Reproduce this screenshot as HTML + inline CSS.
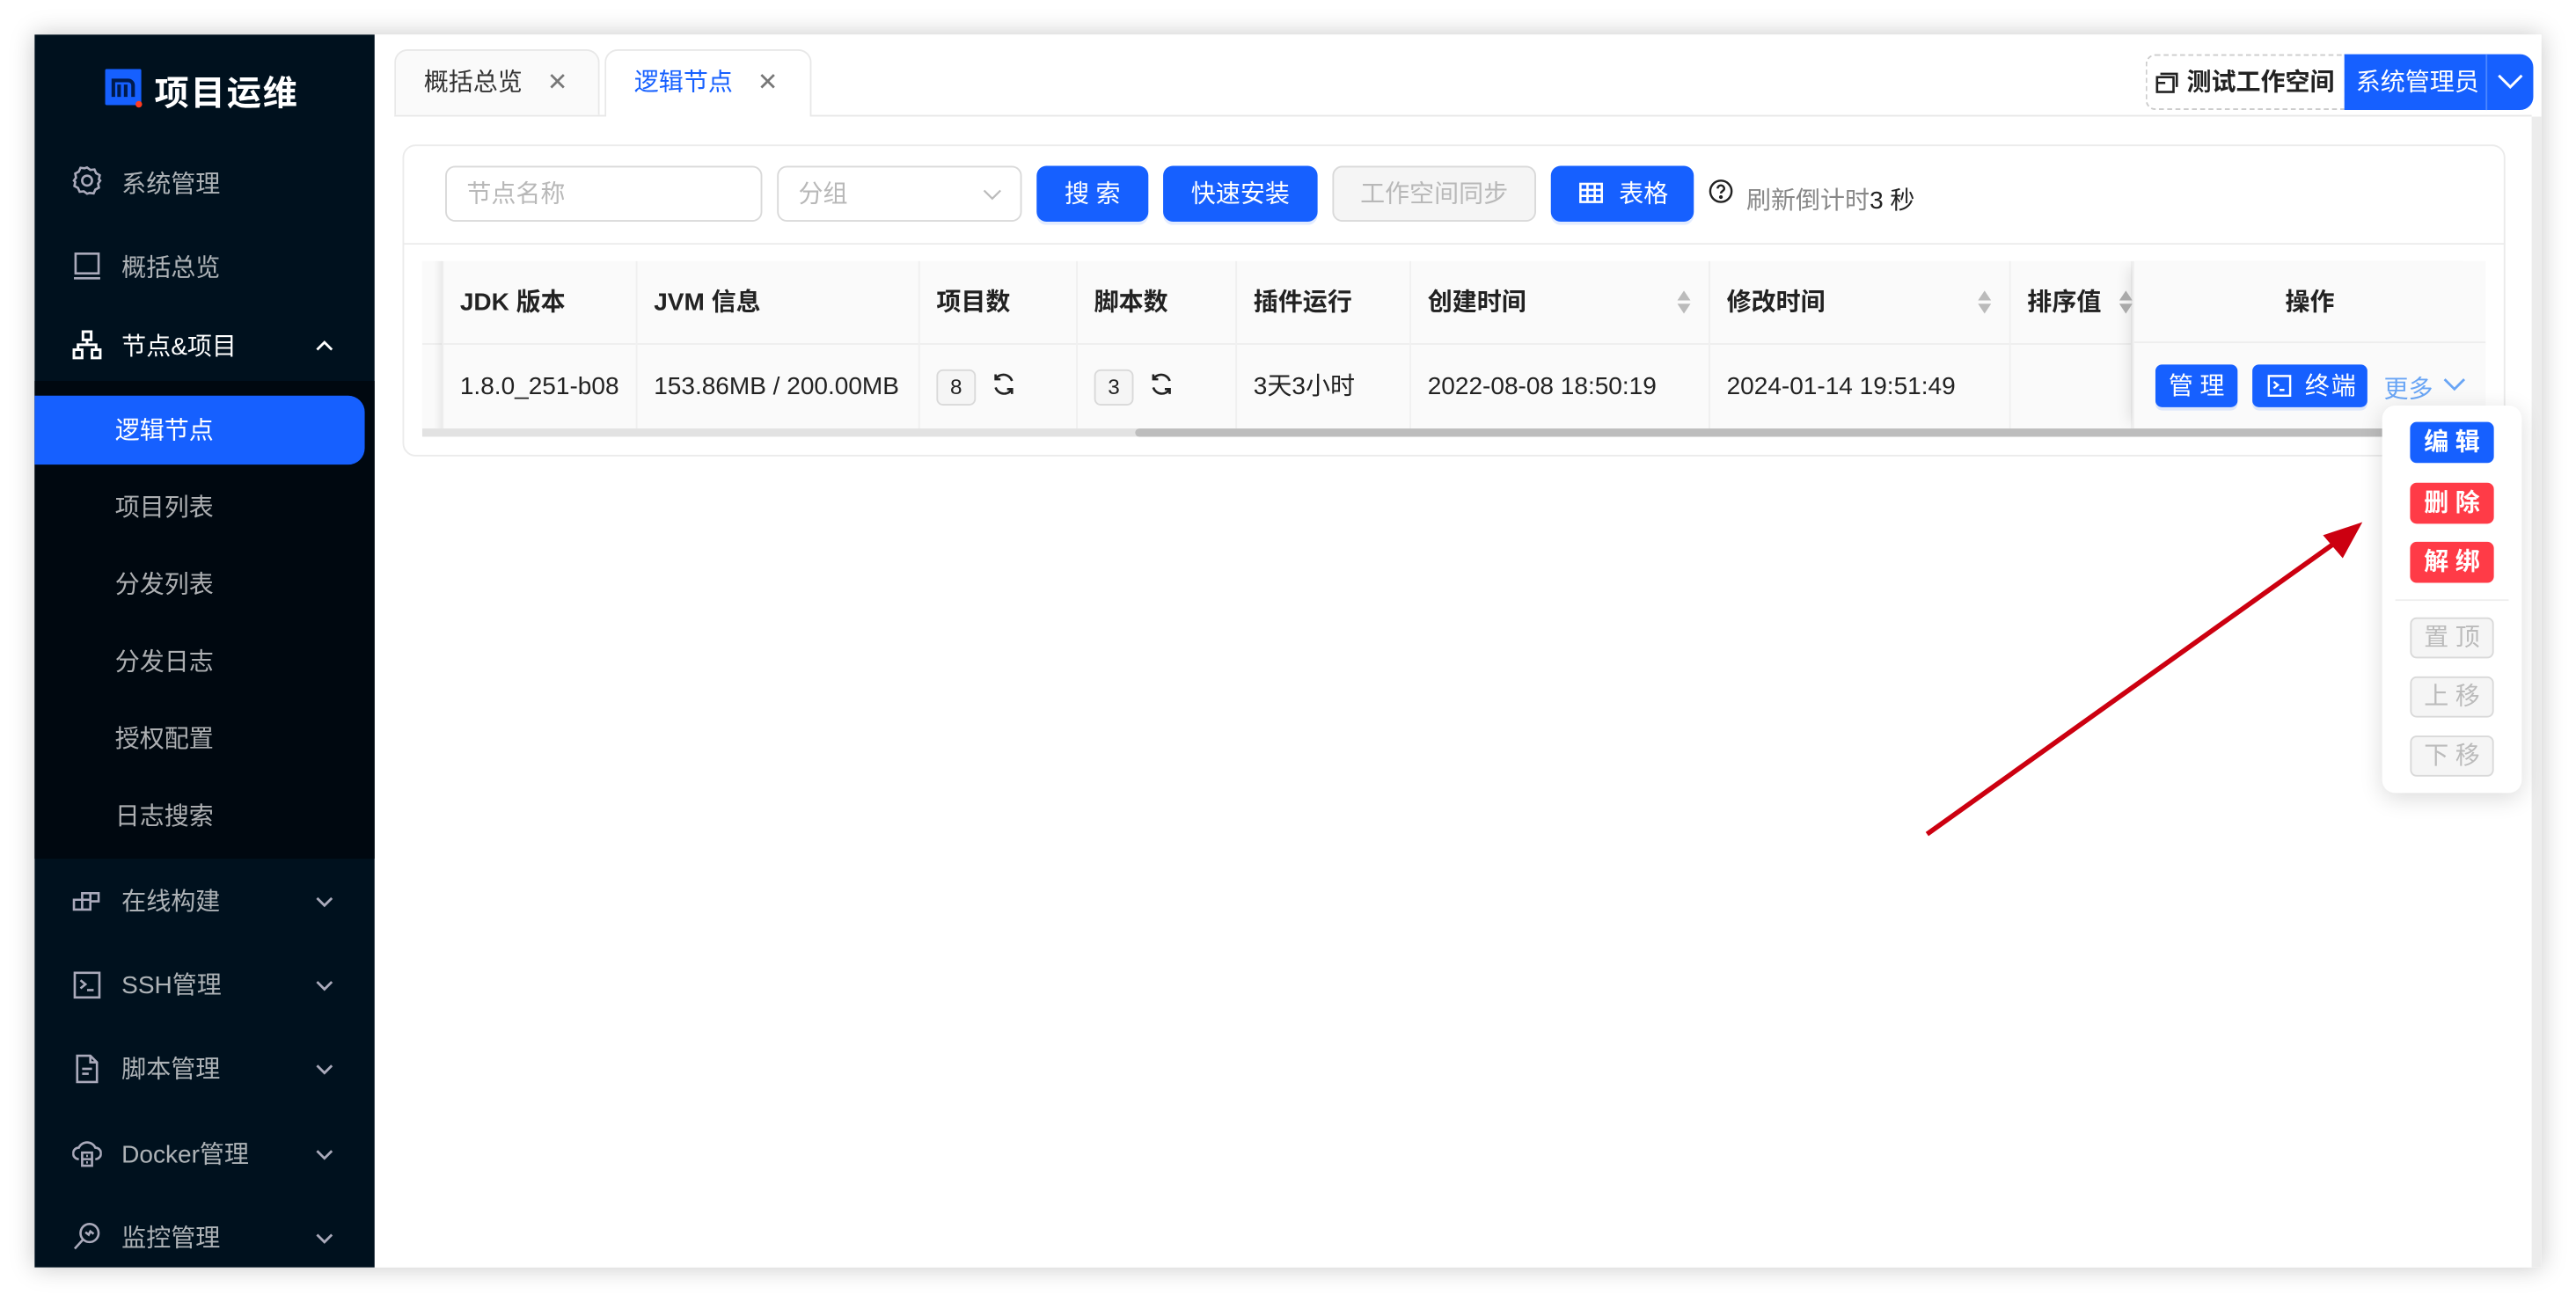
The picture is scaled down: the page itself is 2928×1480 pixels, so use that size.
<!DOCTYPE html>
<html><head><meta charset="utf-8"><style>
*{margin:0;padding:0;box-sizing:border-box}
html,body{width:2928px;height:1480px;overflow:hidden;background:#fff}
body{font-family:"Liberation Sans","Noto Sans CJK SC",sans-serif}
#w{position:absolute;left:0;top:0;width:1568px;height:793px;transform:scale(1.86735,1.86633);transform-origin:0 0;background:#fff}
.a{position:absolute}
.win{left:21px;top:21px;width:1526px;height:751px;background:#fff;box-shadow:0 0 14px rgba(0,0,0,.22);overflow:hidden}
.side{left:0;top:0;width:207px;height:751px;background:#00111e}
.sub{left:0;top:211px;width:207px;height:291px;background:#000810}
.mi{position:absolute;left:53px;color:rgba(255,255,255,.68);font-size:15px;line-height:20px;margin-top:1px}
.si{position:absolute;left:49px;color:rgba(255,255,255,.68);font-size:15px;line-height:20px;margin-top:1px}
.ic{position:absolute;left:23px;width:18px;height:18px}
.chev{position:absolute;left:171px;width:11px;height:7px}
.tab{height:40px;border:1px solid #e8e8e8;border-bottom:none;border-radius:8px 8px 0 0;font-size:15px;line-height:40px;padding-left:17px}
.btn{height:34px;border-radius:6px;font-size:15px;line-height:35px;text-align:center;color:#fff;background:#1660ff;box-shadow:0 2px 0 rgba(22,96,255,.12)}
.th{position:absolute;top:0;height:50px;line-height:51px;font-size:15px;font-weight:bold;color:#222;border-right:1px solid #f0f0f0;padding-left:10px}
.td{position:absolute;top:50px;height:52px;line-height:53px;font-size:15px;color:#222;border-right:1px solid #f0f0f0;padding-left:10px}
.sort{position:absolute;top:18px;width:8px;height:14px}
.badge{display:inline-block;width:24px;height:22px;border:1px solid #d9d9d9;border-radius:4px;background:#f5f5f5;font-size:13px;line-height:20px;text-align:center;vertical-align:middle}
.sb{height:25px;width:51px;border-radius:4px;font-size:15px;line-height:25px;text-align:center;color:#fff;letter-spacing:4px;padding-left:4px;font-weight:bold}
</style></head><body><div id="w">
<div class="a win">
 <div class="a side">
  <svg class="a" style="left:43px;top:21px" width="23" height="24" viewBox="0 0 23 24"><rect x="0" y="0" width="22" height="22" rx="1" fill="#1660ff"/><path d="M5 17V7h9a3 3 0 013 3v7M8.5 17V9.5M12.5 17V9.5" stroke="#001b4d" stroke-width="2.2" fill="none"/><circle cx="20.5" cy="21.5" r="2" fill="#ff3b1f"/></svg>
  <div class="a" style="left:73px;top:20px;color:#fff;font-size:21px;font-weight:bold;letter-spacing:1px">项目运维</div>
  <svg class="ic" style="top:80px" viewBox="0 0 18 18" fill="none" stroke="#aab" stroke-width="1.4"><path d="M9 1l2 1.5 2.5-.3 1 2.3 2.2 1.2-.5 2.5L17 9l-1.3 1.8.5 2.5-2.2 1.2-1 2.3-2.5-.3L9 17l-2-1.5-2.5.3-1-2.3-2.2-1.2.5-2.5L1 9l1.3-1.8-.5-2.5L4 3.5l1-2.3 2.5.3z"/><circle cx="9" cy="9" r="3"/></svg>
  <div class="mi" style="top:81px">系统管理</div>
  <svg class="ic" style="top:132px" viewBox="0 0 18 18" fill="none" stroke="#aab" stroke-width="1.4"><rect x="2" y="1.5" width="14" height="12"/><path d="M1 16.5h16M4 13.5h4"/></svg>
  <div class="mi" style="top:132px">概括总览</div>
  <svg class="ic" style="top:180px" viewBox="0 0 18 18" fill="none" stroke="#fff" stroke-width="1.6"><rect x="6.5" y="1" width="5" height="5"/><rect x="1" y="12" width="5" height="5"/><rect x="12" y="12" width="5" height="5"/><path d="M9 6v3M3.5 12V9h11v3"/></svg>
  <div class="mi" style="top:180px;color:#fff">节点&amp;项目</div>
  <svg class="chev" style="top:186px" viewBox="0 0 11 7"><path d="M1 6l4.5-4.5L10 6" stroke="#fff" stroke-width="1.5" fill="none"/></svg>
  <div class="a sub"></div>
  <div class="a" style="left:0;top:220px;width:201px;height:42px;background:#1660ff;border-radius:0 10px 10px 0"></div>
  <div class="si" style="top:231px;color:#fff">逻辑节点</div>
  <div class="si" style="top:278px">项目列表</div>
  <div class="si" style="top:325px">分发列表</div>
  <div class="si" style="top:372px">分发日志</div>
  <div class="si" style="top:419px">授权配置</div>
  <div class="si" style="top:466px">日志搜索</div>
  <svg class="ic" style="top:518px" viewBox="0 0 18 18" fill="none" stroke="#aab" stroke-width="1.4"><path d="M1 9h10v6H1zM6 9v6M6 9V5h10v5h-5M11 5v4"/></svg>
  <div class="mi" style="top:518px">在线构建</div>
  <svg class="chev" style="top:525px" viewBox="0 0 11 7"><path d="M1 1l4.5 4.5L10 1" stroke="#aab" stroke-width="1.5" fill="none"/></svg>
  <svg class="ic" style="top:570px" viewBox="0 0 18 18" fill="none" stroke="#aab" stroke-width="1.4"><rect x="1.5" y="1.5" width="15" height="15"/><path d="M5 6l3 2.5L5 11M9 12h4"/></svg>
  <div class="mi" style="top:569px">SSH管理</div>
  <svg class="chev" style="top:576px" viewBox="0 0 11 7"><path d="M1 1l4.5 4.5L10 1" stroke="#aab" stroke-width="1.5" fill="none"/></svg>
  <svg class="ic" style="top:621px" viewBox="0 0 18 18" fill="none" stroke="#aab" stroke-width="1.4"><path d="M3 1h8l4 4v12H3zM11 1v4h4M6 9h6M6 12h4"/></svg>
  <div class="mi" style="top:620px">脚本管理</div>
  <svg class="chev" style="top:627px" viewBox="0 0 11 7"><path d="M1 1l4.5 4.5L10 1" stroke="#aab" stroke-width="1.5" fill="none"/></svg>
  <svg class="ic" style="top:673px" viewBox="0 0 18 18" fill="none" stroke="#aab" stroke-width="1.4"><path d="M4 12a3.5 3.5 0 010-7 5.5 5.5 0 0110 0 3.5 3.5 0 010 7"/><rect x="6" y="8" width="6" height="8"/><path d="M6 12h6M8.5 10h1M8.5 14h1"/></svg>
  <div class="mi" style="top:672px">Docker管理</div>
  <svg class="chev" style="top:679px" viewBox="0 0 11 7"><path d="M1 1l4.5 4.5L10 1" stroke="#aab" stroke-width="1.5" fill="none"/></svg>
  <svg class="ic" style="top:723px" viewBox="0 0 18 18" fill="none" stroke="#aab" stroke-width="1.4"><circle cx="10.5" cy="7" r="5.5"/><path d="M6.5 11L1.5 16.5M8 6.5l2 1.5 1-2 2 1.5"/></svg>
  <div class="mi" style="top:723px">监控管理</div>
  <svg class="chev" style="top:730px" viewBox="0 0 11 7"><path d="M1 1l4.5 4.5L10 1" stroke="#aab" stroke-width="1.5" fill="none"/></svg>
 </div>
 <!-- tabs -->
 <div class="a" style="left:219px;top:49px;width:1301px;height:1px;background:#e8e8e8"></div>
 <div class="a tab" style="left:219px;top:9px;width:125px;background:#fafafa;color:#333">概括总览<span style="position:absolute;left:92px;color:#777">✕</span></div>
 <div class="a tab" style="left:347px;top:9px;width:126px;background:#fff;color:#1660ff;height:41px">逻辑节点<span style="position:absolute;left:92px;color:#777">✕</span></div>
 <div class="a" style="left:1285px;top:12px;width:122px;height:34px;border:1px dashed #ccc;border-radius:6px 0 0 6px;font-size:15px;font-weight:bold;line-height:33px;padding-left:24px;color:#222">测试工作空间</div>
 <svg class="a" style="left:1291px;top:23px" width="14" height="13" viewBox="0 0 14 13" fill="none" stroke="#222" stroke-width="1.4"><rect x="1" y="3" width="10" height="9"/><path d="M3 1h10v8M1 6.5h5"/></svg>
 <div class="a" style="left:1406px;top:12px;width:115px;height:34px;background:#1660ff;border-radius:0 8px 8px 0;color:#fff;font-size:15px;line-height:35px;padding-left:7px">系统管理员</div>
 <div class="a" style="left:1492px;top:12px;width:1px;height:34px;background:#4a86ff"></div>
 <svg class="a" style="left:1499px;top:23px" width="16" height="11" viewBox="0 0 16 11"><path d="M1 2l7 7 7-7" stroke="#fff" stroke-width="1.6" fill="none"/></svg>
 <div class="a" style="left:1520px;top:50px;width:6px;height:701px;background:#ececec"></div>
 <!-- card -->
 <div class="a" style="left:224px;top:67px;width:1280px;height:190px;border:1px solid #ebebeb;border-radius:8px"></div>
 <div class="a" style="left:224px;top:127px;width:1280px;height:1px;background:#ebebeb"></div>
 <div class="a" style="left:250px;top:80px;width:193px;height:34px;border:1px solid #d9d9d9;border-radius:6px;font-size:15px;line-height:33px;padding-left:12px;color:#b8b8b8">节点名称</div>
 <div class="a" style="left:452px;top:80px;width:149px;height:34px;border:1px solid #d9d9d9;border-radius:6px;font-size:15px;line-height:33px;padding-left:12px;color:#b8b8b8">分组<svg style="position:absolute;left:124px;top:13px" width="12" height="8" viewBox="0 0 12 8"><path d="M1 1l5 5 5-5" stroke="#bbb" stroke-width="1.2" fill="none"/></svg></div>
 <div class="a btn" style="left:610px;top:80px;width:68px;letter-spacing:4px;padding-left:4px">搜索</div>
 <div class="a btn" style="left:687px;top:80px;width:94px">快速安装</div>
 <div class="a btn" style="left:790px;top:80px;width:124px;background:#f5f5f5;color:#b8b8b8;border:1px solid #d9d9d9;box-shadow:none;line-height:33px">工作空间同步</div>
 <div class="a btn" style="left:923px;top:80px;width:87px;padding-left:26px">表格</div>
 <svg class="a" style="left:940px;top:90px" width="15" height="13" viewBox="0 0 15 13" fill="none" stroke="#fff" stroke-width="1.4"><rect x="1" y="1" width="13" height="11"/><path d="M1 4.7h13M1 8.3h13M5.3 1v11M9.7 1v11"/></svg>
 <svg class="a" style="left:1019px;top:88px" width="15" height="15" viewBox="0 0 15 15" fill="none" stroke="#222" stroke-width="1.3"><circle cx="7.5" cy="7.5" r="6.5"/><path d="M5.5 5.8a2 2 0 114 .2c0 1.3-2 1.4-2 2.8"/><circle cx="7.5" cy="11" r=".5" fill="#222"/></svg>
 <div class="a" style="left:1042px;top:90px;font-size:15px;color:#888">刷新倒计时<span style="color:#222">3 秒</span></div>
 <!-- table -->
 <div class="a" style="left:236px;top:138px;width:1256px;height:107px;background:#fafafa;overflow:hidden">
  <div class="a" style="left:0;top:50px;width:1256px;height:1px;background:#eee"></div>
  <div class="a" style="left:0;top:0;width:13px;height:102px;border-right:1px solid #eee;box-shadow:inset -6px 0 6px -6px rgba(0,0,0,.12)"></div>
  <div class="th" style="left:13px;width:118px">JDK 版本</div>
  <div class="th" style="left:131px;width:172px">JVM 信息</div>
  <div class="th" style="left:303px;width:96px">项目数</div>
  <div class="th" style="left:399px;width:97px">脚本数</div>
  <div class="th" style="left:496px;width:106px">插件运行</div>
  <div class="th" style="left:602px;width:182px">创建时间</div>
  <div class="th" style="left:784px;width:183px">修改时间</div>
  <div class="th" style="left:967px;width:74px">排序值</div>
  <div class="td" style="left:13px;width:118px">1.8.0_251-b08</div>
  <div class="td" style="left:131px;width:172px">153.86MB / 200.00MB</div>
  <div class="td" style="left:303px;width:96px"><span class="badge">8</span></div>
  <div class="td" style="left:399px;width:97px"><span class="badge">3</span></div>
  <div class="td" style="left:496px;width:106px">3天3小时</div>
  <div class="td" style="left:602px;width:182px">2022-08-08 18:50:19</div>
  <div class="td" style="left:784px;width:183px">2024-01-14 19:51:49</div>
  <div class="td" style="left:967px;width:74px"></div>
  <div class="a" style="left:1041px;top:0;width:215px;height:102px;background:#fafafa;box-shadow:-6px 0 8px -4px rgba(0,0,0,.1);border-left:1px solid #eee">
   <div style="height:50px;line-height:51px;text-align:center;font-size:15px;font-weight:bold;color:#222;border-bottom:1px solid #eee">操作</div>
  </div>
  <div class="a" style="left:0;top:102px;width:1256px;height:5px;background:#e2e2e2"></div>
  <div class="a" style="left:434px;top:102px;width:822px;height:5px;background:#bdbdbd;border-radius:3px"></div>
 </div>
 <svg class="a" style="left:582px;top:205px" width="16" height="16" viewBox="0 0 16 16" fill="none" stroke="#222" stroke-width="1.4"><path d="M13 6A5.5 5.5 0 003 5M3 10a5.5 5.5 0 0010 1M3 2v3h3M13 14v-3h-3"/></svg>
 <svg class="a" style="left:678px;top:205px" width="16" height="16" viewBox="0 0 16 16" fill="none" stroke="#222" stroke-width="1.4"><path d="M13 6A5.5 5.5 0 003 5M3 10a5.5 5.5 0 0010 1M3 2v3h3M13 14v-3h-3"/></svg>
 <svg class="sort" style="left:1000px;top:156px" viewBox="0 0 8 14"><path d="M4 0l4 6H0z" fill="#bbb"/><path d="M4 14l4-6H0z" fill="#bbb"/></svg>
 <svg class="sort" style="left:1183px;top:156px" viewBox="0 0 8 14"><path d="M4 0l4 6H0z" fill="#bbb"/><path d="M4 14l4-6H0z" fill="#bbb"/></svg>
 <svg class="sort" style="left:1269px;top:156px" viewBox="0 0 8 14"><path d="M4 0l4 6H0z" fill="#aaa"/><path d="M4 14l4-6H0z" fill="#aaa"/></svg>
 <div class="a btn" style="left:1291px;top:201px;width:50px;height:26px;line-height:27px;border-radius:4px;letter-spacing:4px;padding-left:4px">管理</div>
 <div class="a btn" style="left:1350px;top:201px;width:70px;height:26px;line-height:27px;border-radius:4px;padding-left:26px;letter-spacing:1px">终端</div>
 <svg class="a" style="left:1359px;top:207px" width="15" height="14" viewBox="0 0 15 14" fill="none" stroke="#fff" stroke-width="1.3"><rect x="1" y="1" width="13" height="12"/><path d="M4 4.5l2.5 2L4 8.5M7.5 9.5h3"/></svg>
 <div class="a" style="left:1430px;top:205px;font-size:15px;color:#69a5f5">更多</div>
 <svg class="a" style="left:1466px;top:209px" width="14" height="9" viewBox="0 0 14 9"><path d="M1 1l6 6 6-6" stroke="#69a5f5" stroke-width="1.5" fill="none"/></svg>
</div>
<!-- dropdown -->
<div class="a" style="left:1450px;top:247px;width:85px;height:236px;background:#fff;border-radius:8px;box-shadow:0 3px 14px rgba(0,0,0,.14)">
 <div class="a sb" style="left:17px;top:10px;background:#1660ff">编辑</div>
 <div class="a sb" style="left:17px;top:47px;background:#ff3b47">删除</div>
 <div class="a sb" style="left:17px;top:83px;background:#ff3b47">解绑</div>
 <div class="a" style="left:8px;top:118px;width:69px;height:1px;background:#eee"></div>
 <div class="a sb" style="left:17px;top:129px;background:#f5f5f5;color:#bbb;border:1px solid #d9d9d9;font-weight:normal;line-height:23px">置顶</div>
 <div class="a sb" style="left:17px;top:165px;background:#f5f5f5;color:#bbb;border:1px solid #d9d9d9;font-weight:normal;line-height:23px">上移</div>
 <div class="a sb" style="left:17px;top:201px;background:#f5f5f5;color:#bbb;border:1px solid #d9d9d9;font-weight:normal;line-height:23px">下移</div>
</div>
<svg class="a" style="left:0;top:0" width="1568" height="793"><line x1="1173" y1="508" x2="1425" y2="328" stroke="#cc0010" stroke-width="3"/><path d="M1438 318L1414 326l12 14z" fill="#cc0010"/></svg>
</div></body></html>
